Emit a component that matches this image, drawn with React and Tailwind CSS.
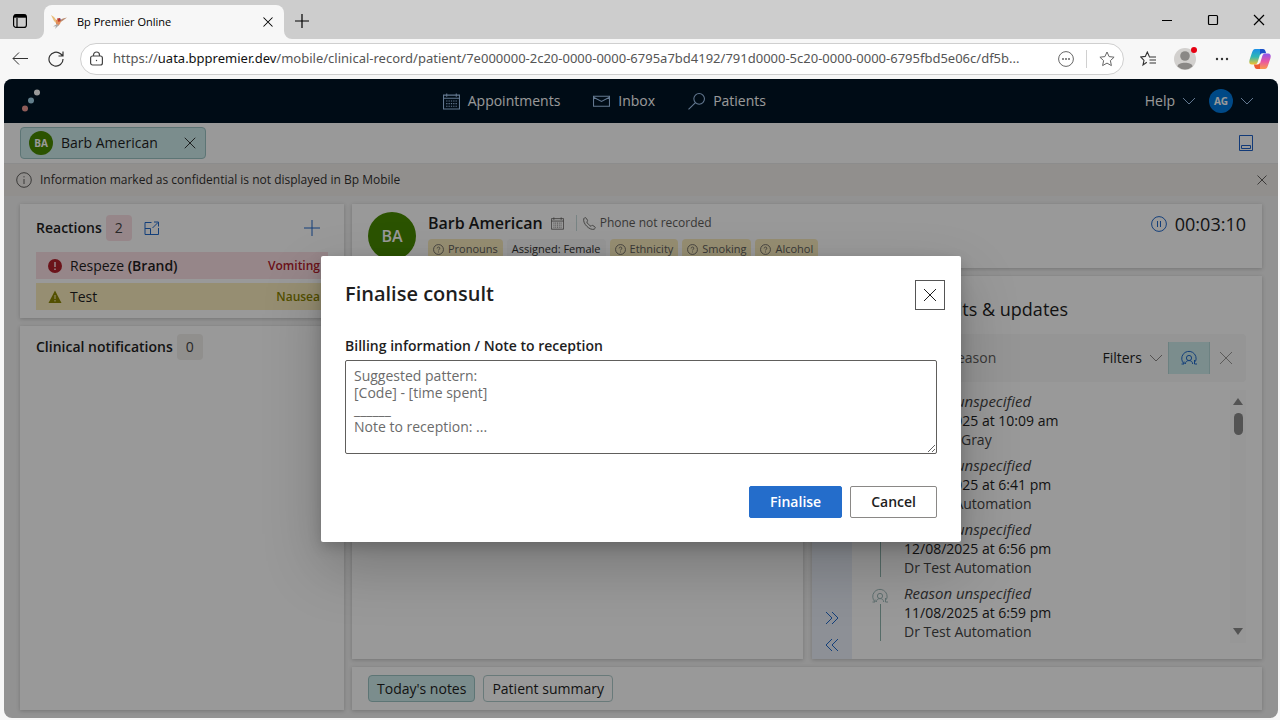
import clsx from 'clsx';

function Icon({ size = 16, className, children, box = 16, width = 1 }) {
  return (
    <svg
      width={size}
      height={size}
      viewBox={`0 0 ${box} ${box}`}
      fill="none"
      stroke="currentColor"
      strokeWidth={width}
      className={clsx('shrink-0', className)}
      aria-hidden="true"
    >
      {children}
    </svg>
  );
}

const CloseIcon = (props) => (
  <Icon {...props}>
    <path d="M2 2l12 12M14 2L2 14" />
  </Icon>
);

const ChevronDown = (props) => (
  <Icon {...props}>
    <path d="M2 5l6 6 6-6" />
  </Icon>
);

const CalendarIcon = (props) => (
  <Icon {...props}>
    <path d="M.5 2h15v13H.5zM.5 5h15M3.500.500v3M12.500.500v3" />
    <path d="M3 7.500h10M3 10h10M3 12.500h10" strokeDasharray="1.200 1" />
  </Icon>
);

const QuestionIcon = () => (
  <Icon size={11} box={12}>
    <circle cx="6" cy="6" r="5.4" strokeWidth=".9" />
    <path d="M4.500 4.800c0-2 3-1.900 3-.2 0 1.200-1.500 1.200-1.500 2.400M6 8.200v1" strokeWidth=".9" />
  </Icon>
);

const ConsultIcon = (props) => (
  <Icon {...props}>
    <circle cx="8" cy="8" r="2.600" />
    <path d="M4.300 14c.2-2.300 1.500-3.400 3.700-3.400s3.500 1.100 3.700 3.400" />
    <path d="M.5 14h2.500v-2.500M3 13.800A7.200 7.200 0 1 1 14.500 11.500M13.500 10v4H16" />
  </Icon>
);

const DoubleChevron = ({ left }) => (
  <Icon size={14} box={14}>
    <path d={left ? 'M7 1L1 7l6 6M13 1L7 7l6 6' : 'M1 1l6 6-6 6M7 1l6 6-6 6'} />
  </Icon>
);

function BrowserTabs() {
  return (
    <div className="flex h-[39px] shrink-0 items-end bg-[#cdcdcd] text-black">
      <button aria-label="Tab actions" className="flex h-9 w-11 items-center justify-center pr-1">
        <Icon width={1.2}>
          <rect x="1.6" y="1.600" width="12.8" height="12.8" rx="2.500" />
          <path d="M2 3.200h12" strokeWidth="3" />
          <path d="M5 5v9" />
        </Icon>
      </button>
      <div className="relative flex h-[34px] w-60 items-center rounded-t-lg bg-[#f7f7f7] pr-2 pl-1.5">
        <svg className="absolute bottom-0 -left-2" width="8" height="8" aria-hidden="true">
          <path d="M8 0v8H0a8 8 0 0 0 8-8z" fill="#f7f7f7" />
        </svg>
        <svg className="absolute -right-2 bottom-0" width="8" height="8" aria-hidden="true">
          <path d="M0 0v8h8a8 8 0 0 1-8-8z" fill="#f7f7f7" />
        </svg>
        <svg width="18" height="16" viewBox="0 0 18 16" className="shrink-0" aria-hidden="true">
          <path d="M1 1l3 2 3 4 2 2-2 1-3-3z" fill="#e8bd7a" />
          <path d="M10 6l3-1.500L17 3.500l-4 3-3 2z" fill="#b98a70" />
          <path d="M6 6l3-1 2 2-1 3-2 2-2-2z" fill="#e2905c" />
          <path d="M7 4.500l3-.5.5 3-2 1z" fill="#c23d2e" />
          <path d="M9 5l1.500-.5v2z" fill="#513a8b" />
          <path d="M7 10l-4 2.500 3-.2L5 15l4-4z" fill="#a9a9a9" />
        </svg>
        <span className="ml-[9px] flex-1 text-[11px]">Bp Premier Online</span>
        <button aria-label="Close tab" className="flex size-4 items-center justify-center">
          <CloseIcon size={12} width={1.4} />
        </button>
      </div>
      <button aria-label="New tab" className="ml-2 flex h-[37px] w-5 items-center justify-center">
        <Icon width={1.2}>
          <path d="M8 1v14M1 8h14" />
        </Icon>
      </button>
      <div className="-mr-0.5 ml-auto flex h-[38px] items-center">
        <button aria-label="Minimise" className="flex w-[46px] justify-center">
          <Icon size={12} box={12}><path d="M1 6.500h10" /></Icon>
        </button>
        <button aria-label="Maximise" className="flex w-[46px] justify-center">
          <Icon size={12} box={12} width={1.2}>
            <rect x="1.500" y="1.500" width="9" height="9" rx="1" />
          </Icon>
        </button>
        <button aria-label="Close" className="flex w-[46px] justify-center">
          <Icon size={12} box={12} width={1.2}><path d="M1 1l10 10M11 1L1 11" /></Icon>
        </button>
      </div>
    </div>
  );
}

const STAR = 'M8 1l2.100 4.600 5 .6-3.700 3.400 1 5L8 12.100l-4.400 2.500 1-5L.9 6.200l5-.6z';

function AddressBar() {
  return (
    <div className="flex h-10 shrink-0 items-center px-3 text-[#333]">
      <button aria-label="Back">
        <Icon><path d="M16 7.500H1M7 1.500l-6 6 6 6" /></Icon>
      </button>
      <button aria-label="Reload" className="ml-5">
        <Icon width={1.2}>
          <path d="M15 8A7 7 0 1 1 12.500 2.800L15 5M15 .5V5h-4.500" />
        </Icon>
      </button>
      <div className="ml-4 flex h-8 min-w-0 flex-1 items-center rounded-full border border-[#cfcfcf] bg-white px-2">
        <Icon width={1.2} className="text-[#444]">
          <rect x="1.6" y="5" width="11.8" height="9" rx="2" />
          <path d="M4.500 5V4a3 3 0 0 1 6 0v1" />
          <circle cx="7.5" cy="9.5" r=".7" fill="currentColor" stroke="none" />
        </Icon>
        <a href="#" className="mx-2 min-w-0 flex-1 truncate font-['Noto_Sans',sans-serif] text-[13px] text-[#555]">
          https://<span className="text-[#111]">uata.bppremier.dev</span>
          /mobile/clinical-record/patient/7e000000-2c20-0000-0000-6795a7bd4192/791d0000-5c20-0000-0000-6795fbd5e06c/df5b...
        </a>
        <button aria-label="Site options" className="text-[#666]">
          <Icon>
            <circle cx="8" cy="8" r="7.400" />
            <path d="M4 8h2M7 8h2M10 8h2" strokeWidth="1.500" />
          </Icon>
        </button>
        <span className="mx-3 h-[18px] w-px bg-[#d0d0d0]" />
        <button aria-label="Favourite this page" className="text-[#666]">
          <Icon><path d={STAR} /></Icon>
        </button>
      </div>
      <div className="ml-4 flex items-center gap-[18px]">
        <button aria-label="Favourites">
          <Icon width={1.1}>
            <path d="M6.800 11.200L3 14l1-4.700L.8 6l4.500-.6L7.300 1l2 4.400M9 6h7M9.500 9h6.500M9.500 12h6.500" />
          </Icon>
        </button>
        <button aria-label="Profile" className="relative">
          <svg width="22" height="22" viewBox="0 0 22 22" aria-hidden="true">
            <circle cx="11" cy="11" r="11" fill="#d2d0ce" />
            <circle cx="11" cy="8" r="4.800" fill="#8a8886" />
            <path d="M3.500 18.500c0-5 15-5 15 0a11 11 0 0 1-15 0z" fill="#8a8886" />
          </svg>
          <span className="absolute -top-px -right-px size-1.5 rounded-full bg-[#e60012]" />
        </button>
        <button aria-label="Settings and more">
          <Icon>
            <g fill="currentColor" stroke="none">
              <circle cx="3" cy="8" r="1.200" />
              <circle cx="8" cy="8" r="1.200" />
              <circle cx="13" cy="8" r="1.200" />
            </g>
          </Icon>
        </button>
        <button aria-label="Copilot" className="-mr-1">
          <svg width="24" height="22" viewBox="0 0 24 22" aria-hidden="true">
            <defs>
              <linearGradient id="cpA" x1="0" y1="0" x2="0" y2="1">
                <stop offset="0" stopColor="#1b8fe8" />
                <stop offset=".5" stopColor="#2fb7b5" />
                <stop offset="1" stopColor="#f4c22b" />
              </linearGradient>
              <linearGradient id="cpB" x1="0" y1="0" x2="0" y2="1">
                <stop offset="0" stopColor="#8d55ee" />
                <stop offset=".5" stopColor="#e855a5" />
                <stop offset="1" stopColor="#fb9a4b" />
              </linearGradient>
            </defs>
            <path d="M14 1H7.500C5 1 4.500 3 3.500 6L1.500 12c-.8 3 .3 4.500 2.500 4.500h3c1.500 0 2.200-1 2.700-2.500L12.500 5c.4-1.300.8-2 2-2z" fill="url(#cpA)" />
            <path d="M12 1h3c1.600 0 2.100.9 2.600 2.500l.5 1.800h-3.600c-1.500 0-2 .8-2.500 2z" fill="#1b50c8" />
            <path d="M10 21h6.500c2.500 0 3-2 4-5l2-6c.8-3-.3-4.500-2.500-4.500h-3c-1.500 0-2.200 1-2.700 2.500L11.500 17c-.4 1.300-.8 2-2 2z" fill="url(#cpB)" />
            <path d="M12 21H9c-1.600 0-2.100-.9-2.600-2.500L5.900 16.500h3.600c1.500 0 2-.8 2.500-2z" fill="#ee5a30" />
          </svg>
        </button>
      </div>
    </div>
  );
}

function AppHeader() {
  return (
    <header className="flex h-11 shrink-0 items-center bg-[#001425] px-4 text-sm text-white">
      <svg width="22" height="24" viewBox="0 0 22 24" aria-hidden="true">
        <circle cx="17" cy="3.500" r="3" fill="#fff" />
        <circle cx="11" cy="11.500" r="3" fill="#a3d2e8" />
        <circle cx="5" cy="19.500" r="3" fill="#ee9a94" />
      </svg>
      <nav className="flex flex-1 items-center justify-center gap-[33px] pl-[22px]">
        <a href="#" className="flex items-center gap-2">
          <CalendarIcon size={17} className="text-[#a5c8f0]" />
          Appointments
        </a>
        <a href="#" className="flex items-center gap-2">
          <Icon size={17} className="text-[#a5c8f0]"><path d="M.5 3h15v9.500H.5zM.5 4L8 8 15.500 4" /></Icon>
          Inbox
        </a>
        <a href="#" className="flex items-center gap-2">
          <Icon size={17} className="text-[#a5c8f0]"><circle cx="10.500" cy="5.500" r="5" /><path d="M7 9L.5 15.500" /></Icon>
          Patients
        </a>
      </nav>
      <button className="flex items-center gap-1.5">
        Help
        <ChevronDown className="text-[#a5c8f0]" />
      </button>
      <button className="ml-3 flex items-center gap-1.5 pr-[7px]">
        <span className="flex size-6 items-center justify-center rounded-full bg-[#007be0] text-[10px] font-bold">AG</span>
        <ChevronDown className="text-[#a5c8f0]" />
      </button>
    </header>
  );
}

function PatientTabs() {
  return (
    <div className="flex h-[41px] shrink-0 items-center justify-between border-b border-[#eaeaea] bg-white pr-6 pl-4">
      <div className="flex h-8 w-[186px] items-center rounded border border-[#9cc4c4] bg-[#cdebeb] px-2">
        <span className="flex size-6 items-center justify-center rounded-full bg-[#498a00] text-[10px] font-bold text-white">BA</span>
        <span className="ml-2 flex-1 text-sm">Barb American</span>
        <button aria-label="Close Barb American"><CloseIcon size={14} /></button>
      </div>
      <button aria-label="Toggle panel" className="text-[#1f62c8]">
        <Icon>
          <path d="M1.500.5h13v15h-13zM3.500 10.500h9v3h-9z" />
        </Icon>
      </button>
    </div>
  );
}

function InfoBar() {
  return (
    <div className="flex h-8 shrink-0 items-center bg-[#f2efec] pr-2.5 pl-3 text-xs text-[#323130]">
      <Icon className="text-[#605e5c]">
        <circle cx="8" cy="8" r="7.300" />
        <path d="M8 7v5M8 4.200v1.200" />
      </Icon>
      <span className="ml-2 flex-1">Information marked as confidential is not displayed in Bp Mobile</span>
      <button aria-label="Dismiss" className="text-[#605e5c]"><CloseIcon size={12} width={1.3} /></button>
    </div>
  );
}

function Card({ className, children }) {
  return (
    <section className={clsx('bg-white shadow-[0_1px_4px_rgba(0,0,0,0.2)]', className)}>{children}</section>
  );
}

function LeftColumn() {
  return (
    <div className="flex w-[324px] shrink-0 flex-col gap-2">
      <Card className="px-4 pt-2 pb-2">
        <div className="flex h-8 items-center">
          <h2 className="text-sm font-semibold">Reactions</h2>
          <span className="ml-1 flex size-[26px] items-center justify-center rounded bg-[#fbdfe5] text-sm text-[#444]">2</span>
          <button aria-label="Open reactions" className="ml-3 text-[#2169cc]">
            <Icon><path d="M7.500 2.500H1v12h13.500V8M1 8.500h5.500V14.500M8.500 8L14 2.500M10 2h4.500v4.500" /></Icon>
          </button>
          <button aria-label="Add reaction" className="mr-2 ml-auto text-[#2169cc]">
            <Icon><path d="M8 0v16M0 8h16" /></Icon>
          </button>
        </div>
        <ul className="mt-2 flex flex-col gap-1 text-sm">
          <li className="flex h-[27px] items-center bg-[#fbdfe5] pr-2 pl-3">
            <svg width="14" height="14" viewBox="0 0 14 14" aria-hidden="true">
              <circle cx="7" cy="7" r="7" fill="#b3202c" />
              <path d="M7 3v5M7 9.500v1.500" stroke="#fbdfe5" strokeWidth="1.500" />
            </svg>
            <span className="ml-2 flex-1">Respeze <b className="font-semibold">(Brand)</b></span>
            <span className="text-xs font-semibold text-[#b3202c]">Vomiting</span>
          </li>
          <li className="flex h-[27px] items-center bg-[#fbedbe] pr-2 pl-3">
            <svg width="14" height="14" viewBox="0 0 14 14" aria-hidden="true">
              <path d="M7 .5L13.500 13H.5z" fill="#8a8500" />
              <path d="M7 5v4M7 10v1.500" stroke="#fbedbe" />
            </svg>
            <span className="ml-2 flex-1">Test</span>
            <span className="text-xs font-semibold text-[#8a8500]">Nausea</span>
          </li>
        </ul>
      </Card>
      <Card className="flex-1 px-4 pt-2">
        <div className="flex h-[26px] items-center">
          <h2 className="text-sm font-semibold">Clinical notifications</h2>
          <span className="ml-1 flex size-[26px] items-center justify-center rounded bg-[#f0eeec] text-sm text-[#444]">0</span>
        </div>
      </Card>
    </div>
  );
}

const TAGS = [
  { label: 'Pronouns', missing: true },
  { label: 'Assigned: Female' },
  { label: 'Ethnicity', missing: true },
  { label: 'Smoking', missing: true },
  { label: 'Alcohol', missing: true },
];

function PatientBanner() {
  return (
    <Card className="flex h-16 shrink-0 items-start overflow-hidden px-4 pt-2">
      <span className="flex size-12 items-center justify-center rounded-full bg-[#498a00] text-base font-semibold text-white">BA</span>
      <div className="ml-3">
        <div className="flex h-[22px] items-center">
          <h1 className="text-base font-semibold">Barb American</h1>
          <CalendarIcon size={13} className="ml-2 text-[#605e5c]" />
          <span className="mr-1.5 ml-3 h-4 w-px bg-[#c8dcdc]" />
          <Icon size={13} className="text-[#605e5c]" width={1.1}>
            <path d="M1 2c1-1.500 2.500-1.500 3.200-.2L5.500 4c.4.800-.1 1.400-.9 2.200 1 2 3 4 5.200 5.200.8-.9 1.400-1.300 2.200-.9l2.300 1.300c1.200.8.900 2.200-.5 3.200C8.500 17-.8 8 1 2z" />
          </Icon>
          <span className="ml-1 text-xs text-[#605e5c]">Phone not recorded</span>
        </div>
        <ul className="mt-[5px] flex gap-1 text-[11px]">
          {TAGS.map((tag) => (
            <li
              key={tag.label}
              className={clsx(
                'flex h-5 items-center gap-1 rounded px-[5px]',
                tag.missing ? 'bg-[#fbedbe] text-[#605e5c]' : 'bg-[#f8f8f8] text-[#323130]'
              )}
            >
              {tag.missing && <QuestionIcon />}
              {tag.label}
            </li>
          ))}
        </ul>
      </div>
      <div className="ml-auto flex h-6 items-center gap-2 text-lg">
        <button aria-label="Pause timer" className="text-[#2169cc]">
          <Icon>
            <circle cx="8" cy="8" r="7.400" />
            <path d="M6.500 5v6M9.500 5v6" />
          </Icon>
        </button>
        00:03:10
      </div>
    </Card>
  );
}

const VISITS = [
  { when: '22/08/2025 at 10:09 am', who: 'Dr Anna Gray' },
  { when: '13/08/2025 at 6:41 pm', who: 'Dr Test Automation' },
  { when: '12/08/2025 at 6:56 pm', who: 'Dr Test Automation' },
  { when: '11/08/2025 at 6:59 pm', who: 'Dr Test Automation' },
];

function UpdatesPanel() {
  return (
    <Card className="flex w-[450px] shrink-0">
      <div className="flex w-10 shrink-0 flex-col items-center justify-end gap-[13px] bg-[#ecf0fa] pb-[7px] text-[#2169cc]">
        <button aria-label="Expand"><DoubleChevron /></button>
        <button aria-label="Collapse"><DoubleChevron left /></button>
      </div>
      <div className="flex min-w-0 flex-1 flex-col px-4 pt-5">
        <h2 className="text-lg leading-[26px]">Visits, results &amp; updates</h2>
        <div className="mt-3 flex h-12 shrink-0 items-center rounded bg-[#f8f8f8]">
          <input
            type="text"
            aria-label="Search by reason"
            placeholder="Search by reason"
            className="min-w-0 flex-1 bg-transparent pl-4 text-sm outline-none placeholder:text-[#605e5c]"
          />
          <button className="flex items-center gap-1.5 text-sm">
            Filters
            <ChevronDown className="text-[#8a8886]" />
          </button>
          <button aria-label="Consults only" className="ml-1 flex h-8 w-[42px] items-center justify-center border-x border-[#b4d8d8] bg-[#cdebeb] text-[#2169cc]">
            <ConsultIcon />
          </button>
          <button aria-label="Clear filters" className="mr-3 ml-2 text-[#9a9896]"><CloseIcon /></button>
        </div>
        <div className="mt-2 flex min-h-0 flex-1">
          <ul className="flex flex-1 flex-col gap-[7px] pt-0.5 text-sm leading-[19px]">
            {VISITS.map((visit) => (
              <li key={visit.when} className="flex">
                <div className="flex w-6 shrink-0 flex-col items-center text-[#a0bcbc]">
                  <ConsultIcon className="mt-1" />
                  <span className="w-px flex-1 bg-[#8fb5ad]" />
                </div>
                <div className="ml-3 text-[#444]">
                  <p className="text-[15px] leading-[19px] italic">Reason unspecified</p>
                  <p className="text-[#1e1e1e]">{visit.when}</p>
                  <p>{visit.who}</p>
                </div>
              </li>
            ))}
          </ul>
          <div className="mb-4 flex w-4 flex-col items-center bg-[#fcfcfc] py-2 text-[#8a8a8a]">
            <svg width="10" height="8" aria-hidden="true"><path d="M5 0l5 7H0z" fill="currentColor" /></svg>
            <span className="mt-[7px] h-[22px] w-[9px] rounded-full bg-current" />
            <svg width="10" height="8" className="mt-auto" aria-hidden="true"><path d="M5 8L0 1h10z" fill="currentColor" /></svg>
          </div>
        </div>
      </div>
    </Card>
  );
}

function FinaliseDialog() {
  return (
    <div className="absolute inset-0 flex items-center justify-center bg-black/40 pt-px">
      <div
        role="dialog"
        aria-labelledby="dialog-title"
        className="w-[640px] rounded-xs bg-white p-6 shadow-[0_25px_58px_rgba(0,0,0,0.22),0_5px_14px_rgba(0,0,0,0.18)]"
      >
        <div className="-mr-2 flex items-start justify-between">
          <h2 id="dialog-title" className="text-xl leading-7 font-semibold">Finalise consult</h2>
          <button aria-label="Close dialog" className="flex size-[30px] items-center justify-center border border-[#555]">
            <CloseIcon />
          </button>
        </div>
        <label htmlFor="billing-note" className="mt-[26px] mb-1 block text-sm font-semibold">
          Billing information / Note to reception
        </label>
        <textarea
          id="billing-note"
          placeholder={'Suggested pattern:\n[Code] - [time spent]\n______\nNote to reception: ...'}
          className="block h-[94px] w-full resize rounded-xs border border-[#605e5c] px-2 py-1.5 text-sm leading-[17px] outline-none placeholder:text-[#6b6b6b]"
        />
        <div className="mt-8 flex justify-end gap-2 text-sm font-semibold">
          <button className="h-8 rounded-xs border border-[#246dcb] bg-[#246dcb] px-5 text-white">Finalise</button>
          <button className="h-8 rounded-xs border border-[#8a8886] bg-white px-5">Cancel</button>
        </div>
      </div>
    </div>
  );
}

export default function App() {
  return (
    <div className="flex h-screen flex-col overflow-hidden bg-[#f7f7f7] font-['Open_Sans',sans-serif] text-[#1e1e1e]">
      <BrowserTabs />
      <AddressBar />
      <div className="relative mr-0.5 mb-0.5 ml-1 flex min-h-0 flex-1 flex-col overflow-hidden rounded-lg bg-[#f3f3f3]">
        <AppHeader />
        <PatientTabs />
        <InfoBar />
        <main className="flex min-h-0 flex-1 gap-2 px-4 py-2">
          <LeftColumn />
          <div className="flex min-w-0 flex-1 flex-col gap-2">
            <PatientBanner />
            <div className="flex min-h-0 flex-1 gap-[9px]">
              <Card className="min-w-0 flex-1" />
              <UpdatesPanel />
            </div>
            <Card className="flex shrink-0 gap-2 px-4 py-2 text-sm">
              <button className="h-[27px] rounded border border-[#9cc4c4] bg-[#cdebeb] px-2">Today's notes</button>
              <button className="h-[27px] rounded border border-[#b0cccc] bg-white px-2">Patient summary</button>
            </Card>
          </div>
        </main>
        <FinaliseDialog />
      </div>
    </div>
  );
}
